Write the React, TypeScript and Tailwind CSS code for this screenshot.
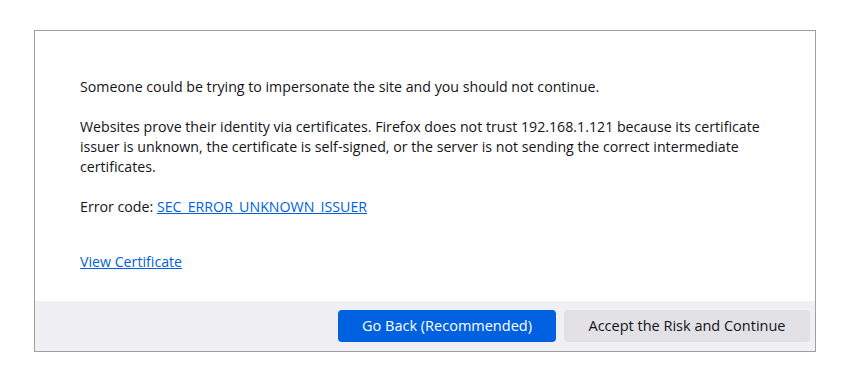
export default function App() {
  return (
    <div className="w-[867px] h-[373px] bg-white relative" style={{ fontFamily: '"Open Sans", "Noto Sans", sans-serif' }}>
      <div className="absolute left-[34px] top-[30px] w-[782px] h-[322px] border border-[#9f9f9f] flex flex-col text-[#15141a] text-[14.2px]">
        <div className="flex-1 pl-[45px] pr-[30px] pt-[46px] leading-[20px]">
          <p>Someone could be trying to impersonate the site and you should not continue.</p>
          <p className="mt-[20px]">Websites prove their identity via certificates. Firefox does not trust 192.168.1.121 because its certificate issuer is unknown, the certificate is self-signed, or the server is not sending the correct intermediate certificates.</p>
          <p className="mt-[20px]">Error code: <a className="text-[#0061e0] underline" href="#">SEC_ERROR_UNKNOWN_ISSUER</a></p>
          <p className="mt-[35px]"><a className="text-[#0061e0] underline" href="#">View Certificate</a></p>
        </div>
        <div className="h-[50px] bg-[#f0f0f4] flex items-center justify-end gap-[8px] pr-[5px]">
          <button className="h-[32px] w-[218px] rounded-[4px] bg-[#0061e0] text-white text-[14.5px] font-medium">Go Back (Recommended)</button>
          <button className="h-[32px] w-[246px] rounded-[4px] bg-[#e2e2e6] text-[#15141a] text-[14.5px] font-medium">Accept the Risk and Continue</button>
        </div>
      </div>
    </div>
  );
}
